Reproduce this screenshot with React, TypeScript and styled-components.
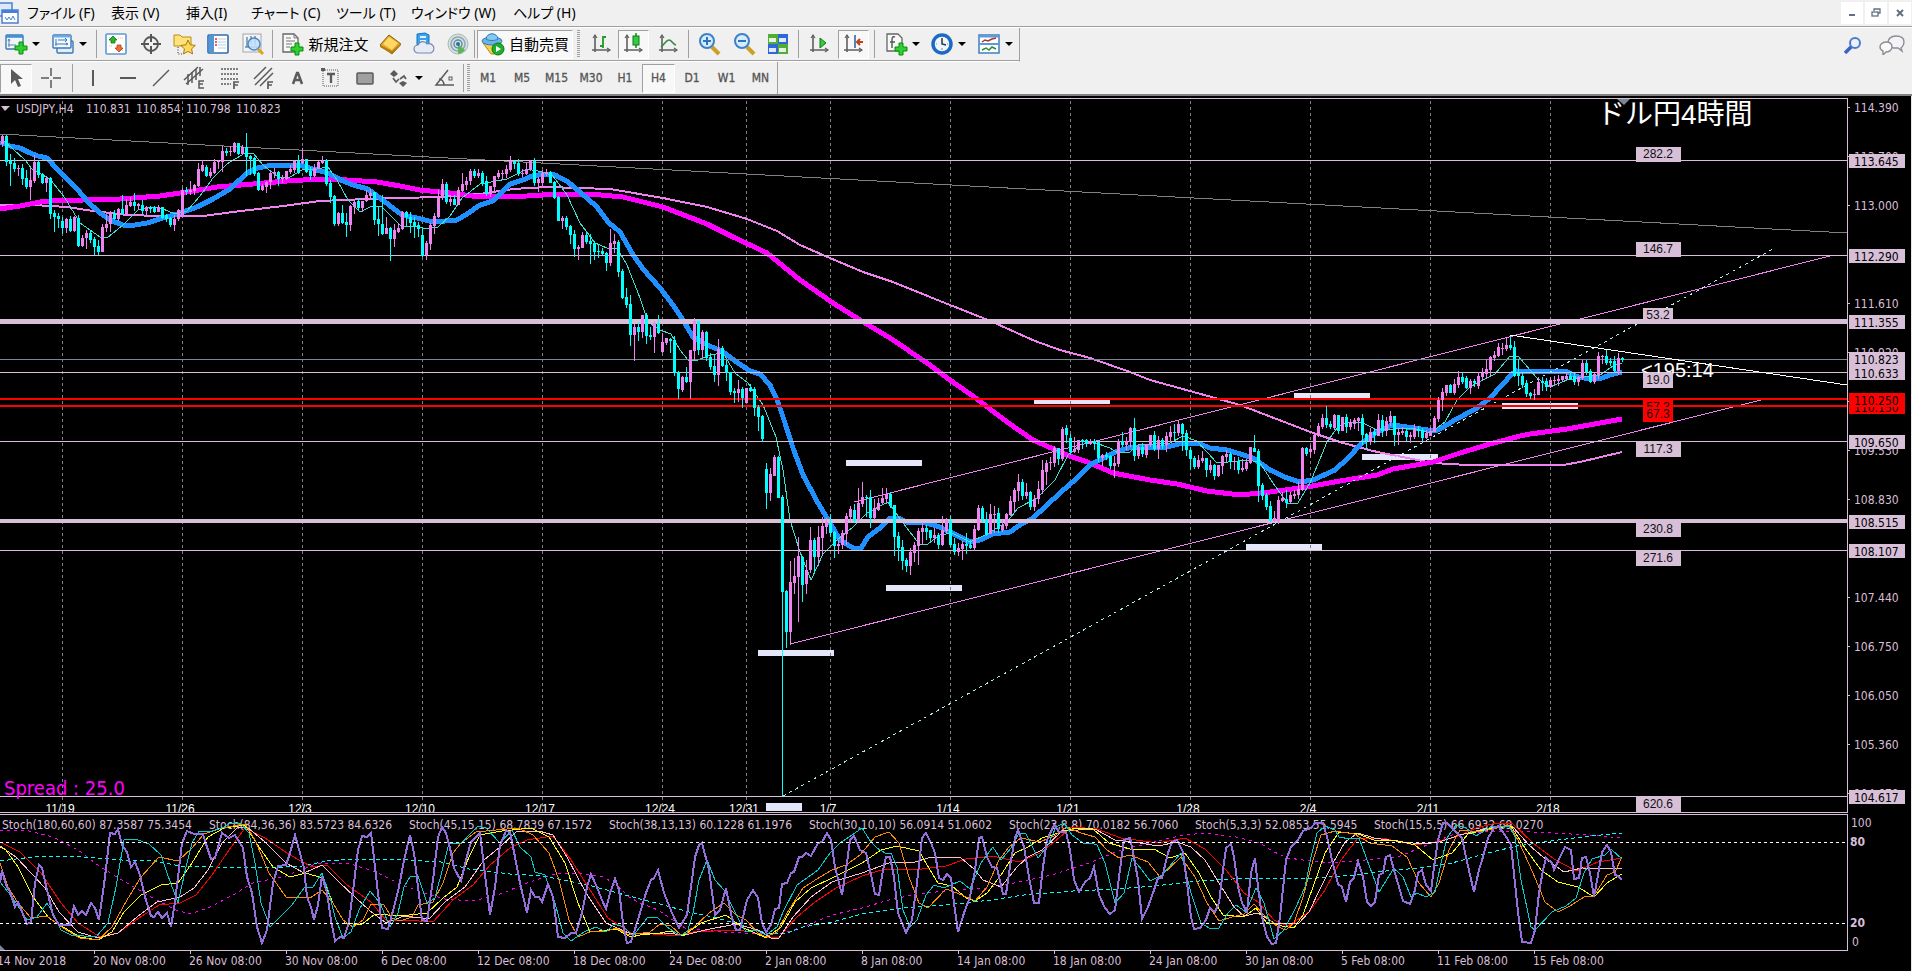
import React from "react";
import styled, { createGlobalStyle, css } from "styled-components";

const THISTLE = "#d8bfd8";
const UP = "#ee82ee";
const DOWN = "#00ffff";
const UI_FONT = '"Noto Sans", "Noto Sans CJK JP", sans-serif';
const CHART_FONT = '"DejaVu Sans Condensed", "DejaVu Sans", sans-serif';
const LABEL_FONT = '"Liberation Sans", "Noto Sans CJK JP", sans-serif';

const GlobalStyle = createGlobalStyle`
  *, *::before, *::after { box-sizing: border-box; }
  body { margin: 0; background: #000; overflow-x: hidden; }
`;

/* ---------- layout ---------- */

const Page = styled.div`
  display: flex;
  flex-direction: column;
  min-height: 100vh;
  background: #000;
  font-family: ${UI_FONT};
`;

const MenuBar = styled.nav`
  display: flex;
  align-items: center;
  height: 28px;
  padding-bottom: 2px;
  background: #f0f0f0;
  border-bottom: 1px solid #fff;
  box-shadow: inset 0 -1px 0 #a0a0a0;
`;

const AppMark = styled.span`
  display: flex;
  width: 27px;
  flex: none;
`;

const MenuItem = styled.button<{ $w: number }>`
  width: ${(p) => p.$w}px;
  flex: none;
  padding: 0;
  border: 0;
  background: none;
  color: #000;
  font: 14px/24px ${UI_FONT};
  font-feature-settings: "palt";
  text-align: left;
  white-space: nowrap;
`;

const WindowButtons = styled.div`
  display: flex;
  gap: 2px;
  margin-left: auto;
  padding-right: 1px;
`;

const WindowButton = styled.button`
  display: flex;
  align-items: center;
  justify-content: center;
  width: 22px;
  height: 22px;
  padding: 0;
  border: 0;
  background: #fff;
`;

const ToolArea = styled.header`
  background: #f0f0f0;
  border-bottom: 2px solid #808080;
`;

const ToolRow = styled.div`
  display: flex;
  align-items: center;
`;

const ToolStrip = styled.div<{ $ruled?: boolean }>`
  display: flex;
  align-items: center;
  height: 32px;
  border-right: 1px solid #a0a0a0;
  ${(p) =>
    p.$ruled &&
    css`
      height: 34px;
      padding-bottom: 1px;
      border-bottom: 1px solid #fff;
      box-shadow: inset 0 -1px 0 #a0a0a0;
    `}
`;

const Tool = styled.button<{ $w: number; $pressed?: boolean }>`
  display: flex;
  align-items: center;
  justify-content: center;
  gap: 4px;
  flex: none;
  width: ${(p) => p.$w}px;
  height: 29px;
  padding: 0;
  border: 1px solid transparent;
  background: none;
  color: #000;
  font: 15px/20px ${UI_FONT};
  white-space: nowrap;
  ${(p) =>
    p.$pressed &&
    css`
      border-color: #a0a0a0 #fff #fff #a0a0a0;
      background: #f8f8f8;
    `}
`;

const PeriodTool = styled(Tool)`
  color: #555;
  font: 12px/16px ${CHART_FONT};
  -webkit-text-stroke: 0.3px #555;
`;

const Separator = styled.span<{ $w?: number }>`
  flex: none;
  width: ${(p) => p.$w ?? 4}px;
  height: 28px;
  background: linear-gradient(#a0a0a0, #a0a0a0) center / 1px 100% no-repeat;
`;

const Grip = styled.span<{ $w: number }>`
  flex: none;
  width: ${(p) => p.$w}px;
  height: 28px;
  background: repeating-linear-gradient(#a0a0a0 0 1px, transparent 1px 2px) center / 3px 100% no-repeat;
`;

const StatusTools = styled.div`
  display: flex;
  align-items: center;
  gap: 16px;
  margin-left: auto;
  padding-right: 6px;
`;

const IconButton = styled.button`
  display: flex;
  padding: 0;
  border: 0;
  background: none;
`;

const ChartWindow = styled.main`
  display: flex;
  flex-direction: column;
  flex: 1;
  gap: 1px;
  padding-top: 2px;
  border-right: 1px solid #e8e8e8;
  background: #000;
`;

const Pane = styled.section<{ $h: number }>`
  display: flex;
  height: ${(p) => p.$h}px;
`;

const Plot = styled.div`
  flex: 1;
  min-width: 0;
  border: solid ${THISTLE};
  border-width: 1px 1px 1px 0;
`;

const Drawing = styled.svg`
  display: block;
  width: 100%;
  height: 100%;
  overflow: hidden;
`;

const Axis = styled.svg`
  display: block;
  flex: none;
  width: 63px;
  height: 100%;
`;

const DateScale = styled.svg`
  display: block;
  width: 100%;
  height: 20px;
  margin-top: -1px;
`;

/* ---------- icons ---------- */

type IconProps = { w?: number; h?: number; children: React.ReactNode };
const Icon = ({ w = 24, h = 24, children }: IconProps) => (
  <svg width={w} height={h} viewBox={`0 0 ${w} ${h}`} fill="none" aria-hidden="true">
    {children}
  </svg>
);

const Caret = () => (
  <svg width="8" height="4" viewBox="0 0 8 4" aria-hidden="true">
    <path d="M0 0h8L4 4z" fill="#000" />
  </svg>
);

const Plus = ({ x, y }: { x: number; y: number }) => (
  <path
    d={`M${x + 4} ${y}h4v4h4v4h-4v4h-4v-4h-4v-4h4z`}
    fill="#2fd02f"
    stroke="#0a8a0a"
    strokeWidth="1"
  />
);

const Axes = ({ x = 3 }: { x?: number }) => (
  <g stroke="#606060" strokeWidth="1.6">
    <path d={`M${x + 1} 3v17M${x - 2} 18h18`} />
    <path d={`M${x - 1} 6l2-3 2 3M${x + 13} 16l3 2-3 2`} strokeWidth="1.2" />
  </g>
);

const LogoIcon = () => (
  <Icon w={20} h={22}>
    <rect x="-4" y="1" width="16" height="13" fill="#dce9fb" stroke="#4a7fd6" strokeWidth="1.5" />
    <rect x="2" y="8" width="16" height="13" fill="#fff" stroke="#4a7fd6" strokeWidth="1.5" />
    <path d="M2 9.500h16" stroke="#4a7fd6" strokeWidth="3" />
    <path d="M5 15l2 3 2-3 2 3 2-4 2 4" stroke="#4a7fd6" />
  </Icon>
);

const NewChartIcon = () => (
  <Icon>
    <rect x="2" y="3" width="17" height="14" rx="1" fill="#eef5fd" stroke="#3c78b4" strokeWidth="1.4" />
    <path d="M2 4.500h17" stroke="#3c8fd8" strokeWidth="2.500" />
    <path d="M5 7v8M4 13h8M4 9l1-2 1 2" stroke="#5a86b0" />
    <Plus x={11} y={10} />
  </Icon>
);

const ProfilesIcon = () => (
  <Icon>
    <rect x="6" y="9" width="16" height="12" rx="1" fill="#e2eefa" stroke="#3c78b4" strokeWidth="1.400" />
    <rect x="2" y="3" width="18" height="13" rx="1" fill="#f2f8fe" stroke="#3c78b4" strokeWidth="1.400" />
    <path d="M2 4.500h18" stroke="#6aaee8" strokeWidth="2" />
    <path d="M5 7v7M4 12h12M7 8h9M14 6l2 2-2 2M15 11l2 1-2 1" stroke="#3c78b4" />
  </Icon>
);

const MarketIcon = () => (
  <Icon>
    <rect x="2" y="2" width="20" height="20" rx="1" fill="#fff" stroke="#5b9bd0" strokeWidth="1.600" />
    <path d="M5 6h4M5 14h4M14 6h5M14 18h5" stroke="#e3b68a" strokeDasharray="1 1" />
    <path d="M9 4l4 4h-2v3H7V8H5z" fill="#28b428" stroke="#0d7a0d" strokeWidth="0.800" />
    <path d="M15 20l4-4h-2v-3h-4v3h-2z" fill="#f06a3a" stroke="#b93b12" strokeWidth="0.800" />
  </Icon>
);

const CrosshairIcon = () => (
  <Icon>
    <circle cx="12" cy="12" r="7" stroke="#555" strokeWidth="1.800" />
    <path d="M12 2v8M12 14v8M2 12h8M14 12h8" stroke="#555" strokeWidth="2" />
  </Icon>
);

const NavigatorIcon = () => (
  <Icon>
    <path d="M2 3h6l2 2h9v9H2z" fill="#ffe37a" stroke="#b58f16" />
    <path d="M6 15v7h4" stroke="#333" strokeDasharray="1 1.500" />
    <path d="M16 8l2.300 4.800 5 .6-3.700 3.500 1 5-4.600-2.500-4.500 2.500.9-5L9 13.400l5-.6z" fill="#ffd95c" stroke="#a8780e" />
  </Icon>
);

const TerminalIcon = () => (
  <Icon>
    <rect x="2" y="3" width="20" height="18" rx="1" fill="#fff" stroke="#2f6cad" strokeWidth="1.600" />
    <path d="M3 4h5v16H3z" fill="#4f97d8" />
    <path d="M9 7h2M9 10h2M9 13h2" stroke="#e03030" strokeWidth="1.400" />
    <path d="M12 7h8M12 10h8M12 13h8M12 16h8" stroke="#b9cfe4" />
  </Icon>
);

const TesterIcon = () => (
  <Icon>
    <rect x="2" y="2" width="18" height="18" fill="#f4f4f4" stroke="#a0a8b0" />
    <path d="M6 5v10M10 4v8M14 4v9M4 15h13" stroke="#6c8db0" strokeWidth="1.500" />
    <circle cx="13" cy="12" r="6" fill="#bfe0fa" fillOpacity="0.850" stroke="#4a86c0" strokeWidth="1.400" />
    <path d="M17 17l5 5" stroke="#d9a520" strokeWidth="3" />
  </Icon>
);

const NewOrderIcon = () => (
  <Icon>
    <path d="M3 2h11l4 4v14H3z" fill="#f8f8f8" stroke="#666" strokeWidth="1.300" />
    <path d="M14 2v4h4M6 6h5M6 9h9M6 12h6M6 15h4" stroke="#777" />
    <Plus x={11} y={11} />
  </Icon>
);

const BookIcon = () => (
  <Icon>
    <path d="M2 13L11 3l12 9-9 10z" fill="#e0a828" stroke="#8a5d08" />
    <path d="M5 12l6-7 9 6-6 7z" fill="#ffd766" />
    <path d="M2 13l12 6 9-8v2l-9 9L2 15z" fill="#b57a10" />
  </Icon>
);

const CloudIcon = () => (
  <Icon>
    <path d="M5 2l8-1 4 2v11H5z" fill="#37a2ee" stroke="#1a72bd" />
    <path d="M8 4h6v2H8zM8 8h6v2H8z" fill="#dff1ff" />
    <path d="M6 21a4 4 0 010-8 5 5 0 019-1 4.500 4.500 0 014 9z" fill="#e6ecf6" stroke="#7688aa" strokeWidth="1.200" />
  </Icon>
);

const SignalIcon = () => (
  <Icon>
    <circle cx="12" cy="12" r="10" fill="#d4e3dc" stroke="#a8b8b4" />
    <circle cx="12" cy="12" r="7" stroke="#8fa6bc" strokeWidth="1.600" />
    <circle cx="12" cy="12" r="4" stroke="#5f86ac" strokeWidth="1.400" />
    <path d="M12 12v10a10 10 0 007-4z" fill="#58b858" />
    <circle cx="12" cy="12" r="2" fill="#2f6cad" />
  </Icon>
);

const AutoTradeIcon = () => (
  <Icon>
    <path d="M2 11h18l-7 11h-3z" fill="#f4cf52" stroke="#b48a18" />
    <ellipse cx="11" cy="9" rx="10" ry="4" fill="#68b4e8" stroke="#2f7ab0" />
    <path d="M5 7c1-7 11-7 12 0-3 2-9 2-12 0z" fill="#86c8f2" stroke="#2f7ab0" />
    <circle cx="17" cy="17" r="6" fill="#1fae2b" stroke="#0b7a14" />
    <path d="M15 14v6l5-3z" fill="#fff" />
  </Icon>
);

const BarsIcon = () => (
  <Icon>
    <Axes x={5} />
    <path d="M11 14h3V5h3M14 14v2" stroke="#1f9a2c" strokeWidth="1.800" />
  </Icon>
);

const CandlesIcon = () => (
  <Icon>
    <Axes x={4} />
    <path d="M14 1v15" stroke="#0d7a0d" strokeWidth="1.400" />
    <rect x="11" y="4" width="6" height="9" fill="#35c94a" stroke="#0d7a0d" />
  </Icon>
);

const LineChartIcon = () => (
  <Icon>
    <Axes x={5} />
    <path d="M5 15c4-3 5-7 8-7s3 4 7 5" stroke="#3b8a4a" strokeWidth="1.600" />
  </Icon>
);

const ZoomIcon = ({ plus }: { plus?: boolean }) => (
  <Icon>
    <path d="M15 15l7 7" stroke="#caa028" strokeWidth="4" />
    <circle cx="10" cy="9" r="7" fill="#d5ecfc" stroke="#3c82c4" strokeWidth="2" />
    <path d={plus ? "M6 9h8M10 5v8" : "M6 9h8"} stroke="#2f74b8" strokeWidth="2" />
  </Icon>
);

const TilesIcon = () => (
  <Icon>
    {[
      [2, 2, "#4fae34"],
      [12, 2, "#2f66d8"],
      [2, 12, "#2f66d8"],
      [12, 12, "#4fae34"],
    ].map(([x, y, c], i) => (
      <g key={i}>
        <rect x={x} y={y} width="10" height="10" fill={String(c)} />
        <path d={`M${Number(x) + 1} ${Number(y) + 4}h7v4h-7z`} fill="#fff" fillOpacity="0.850" />
      </g>
    ))}
  </Icon>
);

const ScrollIcon = () => (
  <Icon>
    <Axes x={5} />
    <path d="M13 6v10l6-5z" fill="#35c94a" stroke="#0d7a0d" />
  </Icon>
);

const ShiftIcon = () => (
  <Icon>
    <Axes x={4} />
    <path d="M13 3v13" stroke="#2f66a8" strokeWidth="1.600" />
    <path d="M21 10h-6M18 7l-3 3 3 3" stroke="#c0401c" strokeWidth="2" />
  </Icon>
);

const IndicatorIcon = () => (
  <Icon>
    <path d="M3 2h11l4 4v13H3z" fill="#f8f8f8" stroke="#666" strokeWidth="1.300" />
    <path d="M11 5c-3-1-3 1-3 4v7M6 10h5" stroke="#555" strokeWidth="1.400" />
    <Plus x={11} y={11} />
  </Icon>
);

const ClockIcon = () => (
  <Icon>
    <circle cx="12" cy="12" r="9" fill="#eef5fc" stroke="#1d6ac2" strokeWidth="3.500" />
    <path d="M12 6v6l4 1" stroke="#333" strokeWidth="1.500" />
    <path d="M12 16v2M6 12h1M17 12h1" stroke="#888" />
  </Icon>
);

const TemplateIcon = () => (
  <Icon>
    <rect x="2" y="3" width="20" height="18" fill="#fff" stroke="#3f7fc0" strokeWidth="1.500" />
    <path d="M2 4.500h20M2 12h20" stroke="#5b9bdc" strokeWidth="2" />
    <path d="M5 10l3-2 3 1 4-2 4-1" stroke="#b0342c" strokeWidth="1.500" />
    <path d="M5 18l4-2 3 2 3-3 4 2" stroke="#2f8a3a" strokeWidth="1.500" />
  </Icon>
);

const SearchIcon = () => (
  <Icon w={18} h={18}>
    <path d="M1 17l7-7" stroke="#3a62c0" strokeWidth="3.500" />
    <circle cx="11" cy="7" r="5" fill="#eaf2fd" stroke="#4d79cf" strokeWidth="2" />
  </Icon>
);

const ChatIcon = () => (
  <Icon w={28} h={20}>
    <path d="M18 1c5 0 8 2 8 6s-2 5-3 6l1 3-4-3h-4c-4 0-6-3-6-6s3-6 8-6z" fill="#f4f4f8" stroke="#8c8c94" strokeWidth="1.400" />
    <path d="M8 7c4 0 6 2 6 5s-3 5-6 5l-3 3v-4c-2-1-3-2-3-4s2-5 6-5z" fill="#fafafc" stroke="#8c8c94" strokeWidth="1.400" />
  </Icon>
);

const G = "#5a5a5a";
const CursorIcon = () => (
  <Icon>
    <path d="M7 3v15l4-4 3 7 3-1-3-7h5z" fill={G} />
  </Icon>
);
const CrossIcon = () => (
  <Icon>
    <path d="M12 2v8M12 14v8M2 12h8M14 12h8" stroke={G} strokeWidth="1.500" />
  </Icon>
);
const VLineIcon = () => (
  <Icon>
    <path d="M12 4v16" stroke={G} strokeWidth="2" />
  </Icon>
);
const HLineIcon = () => (
  <Icon>
    <path d="M4 12h16" stroke={G} strokeWidth="2" />
  </Icon>
);
const TrendIcon = () => (
  <Icon>
    <path d="M4 20L20 4" stroke={G} strokeWidth="1.500" />
  </Icon>
);
const ChannelIcon = () => (
  <Icon>
    <path d="M1 14L15 1M3 18L20 3" stroke={G} strokeWidth="1.500" />
    <path d="M5 8v11M9 6v11M13 3v11M17 1v9" stroke={G} strokeWidth="1.500" />
    <path d="M21 15h-5v7h5M16 18h4" stroke={G} strokeWidth="1.500" />
  </Icon>
);
const FiboIcon = () => (
  <Icon>
    <path d="M3 3h18M3 8h18M3 13h18M3 18h10" stroke={G} strokeWidth="1.500" strokeDasharray="2 1" />
    <path d="M21 16h-5v7M16 19h4" stroke={G} strokeWidth="1.700" />
  </Icon>
);
const PitchIcon = () => (
  <Icon>
    <path d="M2 13L14 1M3 19L20 2M8 20l13-13" stroke={G} strokeWidth="1.500" />
    <path d="M21 16h-5v7M16 19h4" stroke={G} strokeWidth="1.700" />
  </Icon>
);
const TextIcon = () => (
  <Icon>
    <path d="M7 18l4-11h1l4 11M9 14h5" stroke={G} strokeWidth="2.500" />
  </Icon>
);
const LabelIcon = () => (
  <Icon>
    <rect x="4" y="4" width="15" height="16" stroke={G} strokeDasharray="1 1" />
    <path d="M8 8h8M12 8v9" stroke={G} strokeWidth="2.300" />
    <path d="M2 2h4v3H2z" fill={G} />
  </Icon>
);
const RectIcon = () => (
  <Icon>
    <rect x="4" y="7" width="16" height="11" rx="1" fill="#a0a0a0" stroke={G} strokeWidth="1.500" />
  </Icon>
);
const ShapesIcon = () => (
  <Icon>
    <path d="M3 8l4-4 4 4-4 3zM12 17l4-2 4 2-4 4z" fill={G} />
    <path d="M6 12l3 4 3-3M13 13l4-3 2 3" stroke={G} strokeWidth="1.700" />
  </Icon>
);
const AngleIcon = () => (
  <Icon>
    <path d="M15 4L3 19h18M6 13c3 0 5 3 5 6" stroke={G} strokeWidth="1.500" />
    <rect x="16" y="11" width="3" height="3" stroke={G} />
  </Icon>
);

/* ---------- chart data ---------- */

/* Each bar: direction (u/d), then high, body top, body bottom and low,
   in thirds of a pixel below the top of its block. */
type Block = { first: number; top: number; bars: string };
const BLOCKS: Block[] = [
  {
    first: 0,
    top: 90,
    bars: `u135,138,162,172 d135,138,216,228 d192,212,222,288 d205,219,236,245 u225,233,236,258 d222,234,266,285
d240,265,291,297 u234,270,291,330 u196,216,274,279 d212,216,254,264 d248,252,279,282 u262,264,279,305
d262,264,372,387 d360,370,380,426 d370,377,388,415 d382,394,413,432 u384,387,415,428 d378,387,422,426
u378,382,422,426 d376,384,467,470 u435,444,468,472 u420,429,444,477 d424,430,450,459 d442,447,470,495
d451,468,486,496 u402,411,485,486 u375,402,413,426 u362,370,402,426 d360,369,387,390 u354,357,387,393
d316,356,372,375 u327,345,375,378 u320,335,348,350 d309,336,348,363 u340,342,347,360 d330,345,363,375
u348,352,363,378 d348,351,357,368 d348,351,366,368 u345,350,366,366 d350,351,384,386 d372,376,387,395
d380,384,405,411 u376,387,405,423 u356,360,386,392 u295,300,375,378 d291,300,306,315 u273,300,306,315
u282,285,303,314 u220,237,288,291 u211,225,243,246 d226,231,258,260 u234,246,258,264 u208,216,248,252
u210,212,215,238 u168,182,216,246 d174,183,188,198 u168,183,186,198 u156,159,186,190 d158,159,191,194
u166,172,192,195 d129,171,201,258 d195,198,206,255 d200,204,252,258 d246,249,300,303 u282,288,300,303
u272,276,291,309 u243,249,276,297 u234,246,252,264 d243,246,266,288 u255,264,268,278 u243,243,267,270
u225,237,246,252 u210,212,240,250 d196,212,249,252 u175,206,218,222 d206,208,246,249 d232,243,258,270
u222,234,258,260 u213,216,236,238 u198,213,219,222 d207,211,282,288 d270,279,321,339 d316,318,402,408
u366,369,402,408 d346,369,399,402 d368,396,405,441 u345,348,405,423 u330,336,351,372 d325,334,354,360
u332,334,354,366 u300,315,334,336 u297,310,318,324 d306,307,390,405 d351,387,402,438 d315,402,432,436
u381,415,432,432 d411,414,447,513 u402,420,447,471 u400,414,426,428 u362,366,417,420 d362,366,382,408
d366,381,399,429 d382,396,407,444 d396,405,417,441 d411,435,498,502 u454,459,496,510 u399,405,462,480
u370,377,408,432 u300,318,381,384 u267,282,324,330 d276,282,336,342 u316,327,336,348 d315,328,345,345
u291,300,345,345 u249,282,302,306 u261,273,285,300 u237,243,273,285 d238,243,258,264 u237,249,258,264`,
  },
  {
    first: 120,
    top: 120,
    bars: `d153,159,192,198 d168,183,222,227 u198,198,222,231 u168,168,201,219 u150,159,171,177 u150,159,162,180
u135,147,162,173 u108,122,150,155 d122,123,132,147 d116,129,162,168 u147,158,161,171 u126,147,162,165
u120,122,150,153 d114,123,189,198 u172,177,189,216 u150,159,189,198 u147,156,161,168 d153,156,189,189
d183,186,234,237 d228,231,303,303 u288,294,303,327 d288,294,321,330 d315,318,345,372 d330,342,387,411
u375,381,387,420 u336,345,384,384 d336,345,366,372 d342,363,372,432 d363,369,396,420 d372,393,396,414
d384,393,402,405 d396,399,429,453 u327,369,429,438 u342,363,372,399 d360,366,456,471 d447,453,534,537
d504,531,555,564 d525,552,645,678 u612,621,645,723 d606,621,636,663 u585,585,636,654 d579,585,648,672
d621,645,651,660 u603,609,651,699 d585,609,639,642 u639,666,696,699 u654,654,669,675 d654,657,663,699
d648,660,759,768 d753,756,807,837 u768,771,810,816 d741,771,786,789 u690,690,786,837 u594,603,693,720
d603,603,690,705 u630,636,690,714 d633,636,714,723 d699,711,741,750 d705,738,765,786 u657,687,765,798
d678,684,738,741 d720,735,759,783 d756,756,816,825 d804,813,819,849 u780,807,819,846 d801,807,834,864
u804,804,849,849 d792,804,813,816 d801,807,864,888 d855,861,891,933 d885,888,957,966`,
  },
  {
    first: 191,
    top: 380,
    bars: `d249,267,339,387 u264,282,339,363 u225,231,288,288 d228,231,354,354 d345,351,636,1248 d630,633,756,804
u543,606,756,795 u534,588,609,642 u471,528,591,726 d528,531,615,666 u540,570,612,642 u441,480,570,579
d474,480,531,576 u438,471,531,558 u411,438,474,525 u414,426,441,462 d402,429,459,471 d453,456,498,534
u480,492,498,522 u450,459,495,507 u399,408,462,495 u378,387,411,429 d372,390,423,429 u324,369,420,426
u306,351,372,381 d345,351,354,411 d330,351,414,444 u357,384,414,420 u354,369,390,393 u324,354,369,372
u324,342,357,372 d336,342,378,384 d375,375,471,528 d456,468,504,543 d480,501,543,570 d534,540,558,576
u504,516,558,585 u486,495,519,546 u444,453,498,555 u426,444,456,495 d435,444,456,480 d450,450,474,483
u444,465,474,489 d459,465,495,507 u408,450,495,498 u414,420,453,459 d408,423,495,501 d474,492,516,525
u489,504,516,528 u483,492,507,540 d459,492,498,522 d480,495,504,507 u435,447,504,513 u375,384,450,453
d378,384,417,429 d396,417,465,468 u372,402,462,462 u378,402,405,459 d384,399,447,459 u420,435,450,456
u399,402,438,447 u348,363,405,408 u324,330,366,396 u282,306,333,363 d297,306,348,360 u309,336,348,357
d333,336,381,390 u345,357,381,393 u303,327,357,372 u240,270,330,342 u240,249,276,315 u231,246,249,270
u198,204,249,261 d204,204,237,255 u141,147,237,243 d135,144,165,189 d162,174,216,225 u171,207,216,219
u180,180,210,219 d177,180,186,207 d177,180,192,201 u177,183,192,195 d177,183,192,210 d183,186,234,246
u222,225,234,258 d216,225,231,240 d225,228,258,267 u228,249,258,294 u177,183,252,261 d156,183,195,201
u171,183,195,210 u141,144,186,201 d114,144,228,243 u192,201,228,237 d189,201,222,231 u192,192,225,234
u165,165,195,201 d153,165,207,213 u168,180,207,237 d174,180,198,207 u156,168,195,216 u138,156,171,186
d132,156,159,180 u123,132,159,168 d129,132,162,213 d150,159,210,228 d201,210,237,270 d228,234,261,267
u225,240,261,267 u213,234,243,249 d234,234,270,291 u240,255,270,279 d252,255,288,300 u255,255,288,291
u225,228,258,282 u210,222,231,246 d216,222,246,267 u231,243,246,270 d231,243,270,282 u237,264,270,276
u237,246,267,273 u201,201,249,252 d165,204,216,216 d207,213,318,366 d309,315,348,360 d339,345,381,390
d363,378,423,426 u393,414,423,426 u348,360,423,432 u336,354,363,366 d330,357,369,384 u336,345,366,372
u330,342,348,357 u306,327,345,357 u201,204,330,333 d201,204,222,228 u195,207,216,234 u159,165,210,222
u129,138,168,171 u102,114,141,147 d78,114,135,144 d123,132,141,147 u102,105,144,150 d105,105,153,162
u111,111,153,153 d102,111,141,159 u117,126,141,150 u114,120,132,147 u111,114,123,153 d102,114,165,195
d159,162,183,210 u144,156,186,195 d147,156,165,189 u102,120,168,168 d105,120,153,171 u111,123,153,168
u93,108,126,138 d108,108,165,198 u144,156,165,195 u141,153,159,165 d144,153,171,183 u156,165,171,189
u132,147,171,177 d138,147,153,171 d144,150,174,183 u150,159,174,177 u141,153,168,168 u108,114,156,156
u51,60,117,126`,
  },
  {
    first: 360,
    top: 300,
    bars: `u264,276,300,333 u255,255,279,288 d252,255,279,279 u237,252,279,285 u213,231,255,264 d219,231,246,252
d228,234,264,267 u237,243,264,282 d237,243,249,261 u216,228,258,267 u204,219,231,240 u177,207,222,237
u168,171,210,228 u153,165,174,183 u129,141,168,171 u129,144,147,165 u114,135,147,153 d111,135,144,150
d123,141,228,231 d177,219,228,258 d219,228,255,264 d240,249,282,291 d276,279,288,297 u267,282,285,300
u231,246,285,285 d231,243,249,273 d234,243,261,273 u231,240,261,264 u228,240,243,258 u225,237,243,258
u228,228,240,243 u219,228,237,240 d213,228,237,240 d219,228,246,255 u228,231,246,258 u180,189,234,240
d180,189,216,225 d207,213,246,249 u219,222,246,252 u156,168,225,237 u165,168,171,192 d150,168,189,195
d174,183,189,198 d168,183,213,216 u159,174,213,225 d171,174,180,186`,
  },
];

type Bar = { x: number; up: boolean; hi: number; top: number; bottom: number; lo: number };
const BARS: Bar[] = BLOCKS.flatMap(({ first, top, bars }) =>
  bars.split(/\s+/).map((text, i) => {
    const [hi, t, b, lo] = text.slice(1).split(",").map((v) => top + Math.round(Number(v) / 3));
    return { x: 2 + 4 * (first + i), up: text[0] === "u", hi, top: t, bottom: b, lo };
  })
);

const MA_BLUE =
  "0,142 10,146 20,148 30,153 38,156 47,158 58,170 70,182 78,190 88,202 100,213 112,221 123,225 135,225 147,223 163,218 177,214 197,207 213,199 230,189 247,173 257,168 273,165 283,166 300,165 313,169 328,173 343,181 353,185 368,189 380,198 402,215 417,218 433,222 457,220 467,214 480,205 493,201 510,184 523,180 532,176 545,174 555,175 568,182 580,192 597,207 608,222 620,232 632,253 643,269 660,288 673,305 683,320 693,337 707,345 722,351 735,361 750,371 760,374 770,385 778,402 785,423 793,448 803,475 818,503 830,523 840,540 853,548 861,548 868,537 880,528 890,518 898,518 907,522 922,522 937,526 950,532 970,542 980,540 992,534 1010,532 1020,525 1033,518 1060,493 1077,478 1090,465 1103,458 1118,451 1132,447 1167,447 1183,443 1200,444 1210,448 1227,450 1237,453 1253,458 1270,470 1287,478 1300,482 1313,480 1335,470 1348,458 1362,443 1377,432 1392,425 1407,427 1435,431 1442,428 1453,421 1477,408 1490,398 1502,385 1512,374 1517,371 1567,372 1578,377 1590,379 1602,378 1610,375 1622,372";
const MA_MAGENTA =
  "0,209 20,206 40,202 63,200 83,200 120,199 160,196 187,192 217,187 253,184 287,181 320,179 347,180 377,182 400,186 420,190 450,193 480,197 527,196 557,194 590,194 623,197 663,207 707,224 733,237 767,253 800,280 833,303 860,320 890,338 927,363 950,380 977,399 1007,422 1033,440 1067,455 1090,463 1113,473 1150,480 1177,484 1207,491 1240,495 1270,492 1307,487 1340,481 1377,475 1393,469 1433,462 1460,453 1490,444 1520,436 1530,434 1567,429 1600,423 1622,419";
const MA_VIOLET =
  "0,205 33,205 67,207 93,211 127,215 160,216 203,216 233,212 283,206 320,201 367,199 400,198 440,197 480,194 513,189 547,187 610,189 663,198 707,207 747,219 777,231 800,245 830,258 863,272 893,282 930,297 950,305 983,318 997,324 1035,341 1060,350 1090,358 1130,372 1150,380 1190,391 1240,405 1287,423 1313,433 1343,443 1373,451 1407,458 1433,463 1467,465 1563,465 1580,462 1622,452";
const MA_TEAL =
  "3,140 13,149 25,160 32,169 50,179 65,198 80,223 100,237 107,238 123,225 138,210 152,207 163,209 175,214 187,211 200,196 213,178 227,164 245,153 253,153 263,165 278,177 290,177 302,170 317,169 328,167 337,180 348,200 360,212 372,206 382,207 392,217 402,227 413,226 427,229 438,227 450,216 462,198 480,184 507,179 527,169 543,172 553,176 567,195 580,223 595,243 607,248 617,248 627,265 640,298 648,322 660,330 671,334 680,350 688,360 698,360 710,355 723,353 735,373 748,383 763,405 776,437 783,470 790,520 800,552 811,580 823,554 837,540 853,527 867,513 888,502 903,523 920,545 928,544 940,535 952,533 970,542 987,534 1007,522 1018,508 1037,498 1055,480 1068,455 1080,445 1093,442 1110,448 1118,453 1130,452 1138,445 1170,443 1183,436 1197,441 1217,463 1250,460 1260,463 1273,483 1288,504 1298,503 1310,483 1327,442 1337,428 1347,422 1363,423 1377,430 1413,428 1430,433 1445,422 1457,400 1470,387 1477,383 1495,374 1510,356 1518,356 1537,378 1550,387 1567,380 1590,376 1600,375 1613,366 1622,363";

const STOCH = [
  {
    color: "#ff00ff",
    dash: "3 4",
    points:
      "0,830 29,831 53,837 78,850 102,868 127,883 151,897 176,910 190,914 208,908 233,895 253,883 286,876 318,863 351,864 376,872 400,884 424,893 445,899 473,901 498,895 527,883 555,874 580,873 604,877 620,888 629,897 640,903 658,910 685,928 722,932 762,934 783,933 803,927 832,915 862,908 889,900 917,894 946,891 987,888 1019,882 1052,875 1089,863 1121,850 1154,842 1183,835 1207,833 1236,837 1260,843 1272,851 1288,858 1325,863 1354,861 1398,857 1427,845 1452,835 1492,831 1533,832 1590,835 1622,838",
  },
  {
    color: "#00ffff",
    dash: "4 3",
    points:
      "0,861 41,856 82,857 122,860 155,861 180,866 216,867 286,867 302,866 327,861 355,859 408,860 441,862 469,869 510,874 543,876 588,885 640,899 660,904 689,912 713,917 738,924 766,933 787,933 803,927 832,922 862,914 901,908 946,905 991,900 1024,895 1073,891 1117,889 1154,886 1199,881 1232,879 1272,878 1317,878 1354,875 1386,871 1419,868 1452,863 1488,853 1517,846 1558,840 1590,836 1622,833",
  },
  {
    color: "#ff0000",
    points:
      "0,842 20,852 41,873 61,903 78,923 100,937 118,933 139,918 159,905 180,903 196,895 212,875 229,850 245,828 265,838 290,855 312,867 327,865 347,885 371,902 386,920 404,920 433,922 453,900 473,885 490,865 510,848 527,840 553,836 571,860 592,893 608,918 631,933 640,933 679,936 693,932 736,930 752,932 769,938 779,937 797,917 815,902 836,888 862,876 885,869 922,869 946,866 966,859 993,856 1019,862 1040,853 1054,842 1072,827 1097,829 1121,838 1158,843 1185,838 1205,849 1226,870 1244,893 1258,902 1274,920 1288,926 1309,912 1325,890 1341,860 1358,838 1382,838 1415,845 1435,842 1456,837 1476,828 1496,823 1513,824 1533,843 1554,859 1576,871 1598,862 1622,858",
  },
  {
    color: "#ffc0cb",
    points:
      "0,846 16,857 31,873 45,888 59,912 78,932 98,938 118,933 137,917 157,902 180,897 194,888 208,870 222,843 237,828 247,827 265,842 286,863 304,873 322,865 339,882 355,897 369,910 386,923 404,916 429,919 445,902 465,887 484,860 500,847 516,832 539,831 553,835 567,857 586,893 606,923 631,934 664,933 685,935 705,930 736,924 758,930 771,938 779,938 793,917 811,897 832,882 862,873 889,863 915,862 928,858 960,857 975,870 983,880 1001,887 1017,867 1028,857 1042,850 1062,831 1095,829 1115,840 1140,843 1158,846 1177,842 1191,847 1205,860 1219,883 1234,907 1244,916 1258,913 1276,924 1299,923 1309,912 1321,887 1333,863 1345,842 1358,833 1374,838 1403,842 1423,844 1439,842 1460,835 1480,830 1500,826 1513,827 1529,845 1543,857 1564,872 1582,868 1622,869",
  },
  {
    color: "#ffff00",
    points:
      "0,847 6,850 18,867 33,897 49,918 63,927 80,937 98,940 112,932 124,912 141,895 161,885 178,883 192,863 208,837 224,828 245,825 259,847 273,867 290,877 306,873 322,878 333,903 345,923 361,925 375,914 400,916 427,913 443,898 457,887 469,857 480,835 502,831 531,828 549,837 565,863 578,903 590,932 616,929 631,937 640,935 660,933 671,931 683,936 701,923 726,915 742,927 766,938 781,927 795,902 811,888 832,878 862,863 881,850 897,846 919,851 930,870 938,883 952,886 966,898 975,901 987,893 1001,875 1015,853 1028,847 1042,838 1062,832 1075,828 1093,829 1109,843 1130,849 1154,849 1170,858 1185,853 1199,873 1211,897 1223,915 1244,917 1256,908 1266,922 1282,926 1294,928 1303,915 1313,887 1325,853 1339,832 1358,834 1374,840 1394,840 1415,845 1433,860 1452,853 1468,834 1488,829 1511,826 1525,848 1541,870 1558,882 1578,887 1594,897 1607,883 1622,874",
  },
  {
    color: "#ff8c00",
    points:
      "0,863 8,887 18,903 31,918 47,916 63,928 80,938 98,940 112,927 127,900 141,877 159,857 178,861 192,848 204,834 222,828 245,824 255,840 269,873 286,897 310,898 322,890 333,903 343,920 353,927 363,920 371,904 384,905 392,918 400,921 412,917 418,905 433,902 443,883 453,853 461,843 476,832 496,830 518,828 533,835 549,853 559,880 569,920 578,937 592,931 604,932 616,928 629,935 650,932 660,924 671,926 681,935 693,928 709,913 724,903 736,915 746,920 758,933 766,937 777,932 787,913 803,888 820,877 832,870 846,865 860,855 875,837 889,832 899,843 909,877 919,903 928,908 946,889 962,895 975,901 987,887 999,860 1009,847 1021,838 1040,842 1056,835 1066,827 1081,833 1095,837 1107,850 1119,858 1130,855 1148,862 1160,877 1181,857 1195,877 1207,903 1219,921 1232,917 1244,914 1254,904 1264,915 1278,927 1286,930 1294,923 1303,897 1313,860 1321,835 1335,831 1354,834 1370,843 1392,846 1407,857 1419,883 1431,897 1439,883 1449,850 1460,830 1480,832 1509,825 1519,842 1533,873 1545,902 1558,912 1570,906 1584,897 1594,896 1607,875 1615,872 1622,857",
  },
  {
    color: "#00ced1",
    points:
      "0,882 12,897 27,920 37,917 47,903 53,913 61,930 71,935 84,936 96,937 108,923 116,887 124,840 135,839 149,844 161,855 167,873 178,903 186,867 192,843 199,831 212,831 222,828 231,823 241,824 249,833 255,863 261,903 270,927 282,915 292,905 304,888 313,887 322,873 329,893 335,917 343,938 351,932 359,910 370,891 380,903 390,927 398,913 404,887 410,877 418,876 427,903 435,898 443,867 449,843 461,844 469,835 478,826 486,828 500,843 512,830 520,847 531,857 535,872 545,875 555,903 563,933 571,941 584,932 596,927 606,932 614,924 624,927 633,936 640,927 648,917 658,918 667,927 679,935 687,933 693,913 699,880 707,860 715,880 724,890 730,902 740,922 746,932 756,930 766,935 777,927 783,912 797,885 818,870 830,853 840,843 852,835 862,828 871,842 877,848 885,853 891,853 897,867 903,910 910,927 917,920 926,895 934,885 944,888 960,881 970,889 981,863 993,847 1001,860 1011,848 1019,833 1026,834 1038,858 1048,845 1056,827 1064,823 1072,835 1083,843 1091,843 1097,845 1105,863 1115,903 1124,893 1132,858 1142,870 1150,881 1162,875 1181,853 1191,893 1201,923 1209,928 1219,928 1228,913 1236,905 1246,912 1256,888 1264,903 1274,939 1284,930 1296,907 1305,887 1311,857 1317,833 1325,826 1335,830 1339,837 1350,839 1359,838 1366,857 1379,892 1394,868 1403,877 1411,897 1417,893 1426,897 1435,892 1441,863 1447,838 1456,825 1466,828 1476,836 1492,826 1509,826 1515,837 1521,880 1531,927 1535,930 1552,912 1566,906 1576,898 1584,873 1592,859 1605,855 1611,849 1622,859",
  },
  {
    color: "#9370db",
    width: 2,
    points:
      "0,883 2,870 6,885 10,892 15,907 18,902 27,924 31,922 35,883 39,865 42,868 47,890 53,915 59,925 70,925 74,906 78,915 82,911 86,915 91,903 95,908 99,920 105,877 110,833 115,834 118,829 122,845 127,852 131,867 135,862 140,875 145,897 151,916 154,917 158,912 162,918 167,913 171,927 175,902 178,877 182,843 187,831 194,834 203,834 207,847 211,859 215,858 222,833 229,838 235,835 243,848 247,877 252,893 257,927 262,943 267,930 273,883 278,866 286,865 290,853 295,835 300,853 304,868 307,897 311,907 314,920 318,905 322,876 327,893 331,920 335,941 340,937 344,938 349,922 354,883 358,850 362,836 367,837 371,833 375,867 380,910 382,928 388,929 394,907 399,887 404,860 410,835 414,853 418,887 422,920 427,921 433,880 438,837 442,827 446,833 450,848 454,868 461,881 466,860 471,842 480,833 484,867 490,915 495,887 500,845 506,831 510,832 515,857 520,883 527,913 531,890 535,897 539,897 542,902 548,884 553,897 558,937 565,938 571,933 576,933 582,913 587,887 591,874 596,885 602,900 606,909 610,893 615,879 619,890 623,923 627,943 631,942 640,913 646,893 651,880 654,878 658,870 664,893 672,913 679,928 687,915 691,887 695,857 699,845 702,843 709,870 715,915 720,910 726,888 732,918 736,930 740,930 747,900 753,890 758,898 762,923 766,932 771,925 775,909 779,908 782,884 787,883 791,873 794,872 799,857 802,857 806,853 811,856 818,843 822,842 827,833 831,840 835,867 842,895 846,870 850,840 854,836 860,850 866,853 870,870 875,894 879,895 883,870 886,857 890,857 894,877 898,913 906,933 912,920 917,883 922,838 926,833 931,843 935,853 939,878 943,880 947,874 951,878 954,903 958,932 964,913 970,897 975,870 979,838 982,837 987,857 992,867 997,868 1003,894 1006,894 1011,860 1015,838 1018,830 1024,847 1029,877 1034,903 1039,903 1043,867 1047,840 1054,825 1059,832 1066,832 1070,850 1074,880 1079,892 1085,882 1090,878 1094,867 1099,895 1105,908 1110,914 1115,910 1119,877 1124,840 1130,838 1134,857 1138,880 1142,919 1148,907 1154,890 1158,878 1162,878 1168,853 1172,842 1177,840 1183,852 1187,883 1191,917 1194,929 1200,928 1206,920 1210,908 1215,912 1219,903 1223,870 1226,848 1231,844 1234,857 1238,887 1242,903 1247,912 1251,873 1255,858 1258,887 1262,917 1267,937 1272,944 1276,943 1280,917 1286,860 1291,847 1298,840 1303,831 1311,828 1315,823 1323,823 1327,837 1332,860 1338,884 1342,887 1346,902 1350,882 1354,878 1358,861 1363,877 1367,902 1371,906 1375,902 1379,875 1383,873 1386,857 1390,855 1394,870 1399,887 1403,901 1410,904 1415,890 1418,873 1422,870 1426,885 1431,891 1434,867 1438,840 1443,823 1447,823 1454,830 1462,838 1466,857 1470,875 1474,892 1479,870 1483,857 1488,838 1494,828 1498,826 1505,835 1511,845 1516,893 1519,920 1522,942 1531,943 1535,930 1539,893 1543,870 1546,858 1552,863 1554,870 1560,857 1565,847 1571,850 1574,879 1579,878 1582,858 1586,857 1590,873 1594,897 1598,875 1602,852 1607,845 1611,852 1615,875 1618,876 1622,880",
  },
];

const WEEKS: [number, string][] = [
  [62, "11/19"], [182, "11/26"], [302, "12/3"], [422, "12/10"], [542, "12/17"], [662, "12/24"], [746, "12/31"],
  [830, "1/7"], [950, "1/14"], [1070, "1/21"], [1190, "1/28"], [1310, "2/4"], [1430, "2/11"], [1550, "2/18"],
];

/* y, thickness, colour */
const LEVELS: [number, number, string][] = [
  [160, 1, THISTLE], [255, 1, THISTLE], [319, 5, THISTLE], [359, 1, "#778899"], [372, 1, THISTLE],
  [398, 2, "#ff0000"], [405, 2, "#ff0000"], [441, 1, THISTLE], [519, 4, THISTLE], [550, 1, THISTLE], [796, 1, THISTLE],
];

/* Short highlights over swing highs and lows: x, y, width, height */
const SWINGS = [
  [846, 460, 76, 6], [886, 585, 76, 6], [758, 650, 76, 6], [1034, 400, 76, 4], [1294, 393, 76, 5],
  [1362, 454, 76, 6], [1246, 544, 76, 6], [1502, 403, 76, 6], [766, 803, 36, 8],
];

/* text, y of the box, narrow box, red box */
const TAGS: [string, number, boolean, boolean][] = [
  ["282.2", 147, false, false], ["146.7", 242, false, false], ["53.2", 308, true, false], ["19.0", 373, true, false],
  ["57.3", 400, true, true], ["67.3", 407, true, true], ["117.3", 442, false, false], ["230.8", 522, false, false],
  ["271.6", 551, false, false], ["620.6", 797, false, false],
];

const SCALE: [number, string][] = [
  [108, "114.390"], [157, "113.700"], [206, "113.000"], [304, "111.610"], [353, "110.920"], [402, "110.220"],
  [451, "109.530"], [500, "108.830"], [598, "107.440"], [647, "106.750"], [696, "106.050"], [745, "105.360"],
  [794, "104.670"],
];

const PRICE_BOXES: [number, string, boolean][] = [
  [161, "113.645", false], [256, "112.290", false], [322, "111.355", false], [359, "110.823", false],
  [373, "110.633", false], [407, "110.150", true], [400, "110.250", true], [442, "109.650", false],
  [522, "108.515", false], [551, "108.107", false], [797, "104.617", false],
];

const DATES = [
  "14 Nov 2018", "20 Nov 08:00", "26 Nov 08:00", "30 Nov 08:00", "6 Dec 08:00", "12 Dec 08:00", "18 Dec 08:00",
  "24 Dec 08:00", "2 Jan 08:00", "8 Jan 08:00", "14 Jan 08:00", "18 Jan 08:00", "24 Jan 08:00", "30 Jan 08:00",
  "5 Feb 08:00", "11 Feb 08:00", "15 Feb 08:00",
];

const QUOTES = ["110.831", "110.854", "110.798", "110.823"];

const STOCH_TITLES: [number, string][] = [
  [2, "Stoch(180,60,60) 87.3587 75.3454"], [209, "Stoch(84,36,36) 83.5723 84.6326"],
  [409, "Stoch(45,15,15) 68.7839 67.1572"], [609, "Stoch(38,13,13) 60.1228 61.1976"],
  [809, "Stoch(30,10,10) 56.0914 51.0602"], [1009, "Stoch(23,8,8) 70.0182 56.7060"],
  [1195, "Stoch(5,3,3) 52.0853 55.5945"], [1374, "Stoch(15,5,5) 66.6932 69.0270"],
];

const Caption = styled.text<{ $dark?: boolean; $strong?: boolean }>`
  font: ${(p) => (p.$strong ? "bold" : "normal")} 12px ${CHART_FONT};
  fill: ${(p) => (p.$dark ? "#000" : THISTLE)};
`;
const TagText = styled.text`
  font: 12px ${LABEL_FONT};
  fill: #111;
  text-anchor: middle;
`;
const WeekText = styled.text`
  font: 12px ${LABEL_FONT};
  fill: #fff;
  text-anchor: middle;
`;

/* ---------- panes ---------- */

const PricePlot = () => (
  <Drawing role="img" aria-label="USDJPY H4">
    <defs>
      <pattern id="dashes" width="1" height="6" patternUnits="userSpaceOnUse">
        <rect width="1" height="3" fill="#808080" />
      </pattern>
    </defs>
    <g transform="translate(0 -99)">
      {SWINGS.map(([x, y, w, h]) => (
        <rect key={`${x}-${y}`} x={x} y={y} width={w} height={h} fill="#e6e6fa" />
      ))}
      {WEEKS.map(([x]) => (
        <g key={x} transform={`translate(${x} 101)`}>
          <rect width="1" height="712" fill="url(#dashes)" />
        </g>
      ))}
      <g fill="none" shapeRendering="crispEdges">
        <path d="M0 134L1847 233" stroke="#808080" />
        <polyline points={MA_VIOLET} stroke={UP} strokeWidth="2" />
        <polyline points={MA_MAGENTA} stroke="#ff00ff" strokeWidth="5" />
        <polyline points={MA_BLUE} stroke="#1e90ff" strokeWidth="5" />
        <polyline points={MA_TEAL} stroke="#40e0d0" />
        <path d="M854 502L1830 256M790 644L1761 400" stroke={UP} />
        <path d="M783 796L1773 249" stroke="#afeeee" strokeDasharray="3 4" />
      </g>
      {LEVELS.map(([y, h, color]) => (
        <rect key={y} x="0" y={y} width="100%" height={h} fill={color} />
      ))}
      {BARS.map((b) => (
        <g key={b.x} fill={b.up ? UP : DOWN}>
          <rect x={b.x} y={b.hi} width="1" height={Math.max(1, b.lo - b.hi)} />
          <rect x={b.x - 1} y={b.top} width="3" height={Math.max(1, b.bottom - b.top)} />
        </g>
      ))}
      <path d="M1510 335L1847 385" stroke="#fff" shapeRendering="crispEdges" />
      <text x="1641" y="377" fill="#fff" fontFamily={LABEL_FONT} fontSize="20">
        &lt;195:14
      </text>
      {TAGS.map(([text, y, narrow, red]) => (
        <g key={text}>
          <rect
            x={narrow ? 1643 : 1636}
            y={y}
            width={narrow ? 30 : 45}
            height={narrow && y === 308 ? 12 : 15}
            fill={red ? "#ff0000" : THISTLE}
          />
          <TagText x="1658" y={y + 11}>
            {text}
          </TagText>
        </g>
      ))}
      {WEEKS.map(([x, label]) => (
        <WeekText key={label} x={x - 2} y="813">
          {label}
        </WeekText>
      ))}
      <path d="M1617 99h13l-6 6z" fill="#778899" />
      <text x="1597" y="124" fill="#fff" fontFamily={LABEL_FONT} fontSize="28">
        ドル円4時間
      </text>
      <path d="M1 106h9l-5 5z" fill={THISTLE} />
      <Caption x="16" y="113">
        USDJPY,H4
      </Caption>
      {QUOTES.map((quote, i) => (
        <Caption key={quote} x={86 + 50 * i} y="113">
          {quote}
        </Caption>
      ))}
      <text x="4" y="795" fill="#ff00ff" fontFamily={CHART_FONT} fontSize="20">
        Spread : 25.0
      </text>
    </g>
  </Drawing>
);

const PriceAxis = () => (
  <Axis aria-label="Price scale">
    <g transform="translate(0 -98)">
      {SCALE.map(([y, text]) => (
        <g key={text}>
          <rect x="0" y={y - 1} width="2" height="1" fill={THISTLE} />
          <Caption x="6" y={y + 4}>
            {text}
          </Caption>
        </g>
      ))}
      {PRICE_BOXES.map(([y, text, red]) => (
        <g key={text}>
          <rect x="1" y={y - 7} width="56" height="14" fill={red ? "#ff0000" : THISTLE} />
          <Caption x="6" y={y + 5} $dark>
            {text}
          </Caption>
        </g>
      ))}
    </g>
  </Axis>
);

const StochPlot = () => (
  <Drawing role="img" aria-label="Stochastic oscillators">
    <defs>
      <pattern id="guide" width="6" height="1" patternUnits="userSpaceOnUse">
        <rect width="3" height="1" fill="#fff" />
      </pattern>
    </defs>
    <g transform="translate(0 -815)">
      {STOCH_TITLES.map(([x, title]) => (
        <Caption key={title} x={x} y="829">
          {title}
        </Caption>
      ))}
      <g fill="none" shapeRendering="crispEdges">
        {STOCH.map((s) => (
          <polyline key={s.color} points={s.points} stroke={s.color} strokeWidth={s.width ?? 1} strokeDasharray={s.dash} />
        ))}
      </g>
      <rect x="0" y="842" width="100%" height="1" fill="url(#guide)" />
      <rect x="0" y="923" width="100%" height="1" fill="url(#guide)" />
      <path d="M0 945l5 5H0z" fill="#778899" />
    </g>
  </Drawing>
);

const StochAxis = () => (
  <Axis aria-label="Oscillator scale">
    <g transform="translate(0 -814)">
      <Caption x="3" y="827">100</Caption>
      <Caption x="2" y="846" $strong>80</Caption>
      <Caption x="2" y="927" $strong>20</Caption>
      <Caption x="4" y="946">0</Caption>
    </g>
  </Axis>
);

const MENU: [string, number][] = [
  ["ファイル (F)", 84], ["表示 (V)", 75], ["挿入(I)", 65], ["チャート (C)", 85], ["ツール (T)", 75],
  ["ウィンドウ (W)", 102], ["ヘルプ (H)", 70],
];

const PERIODS: [string, number][] = [
  ["M1", 34], ["M5", 34], ["M15", 35], ["M30", 34], ["H1", 34], ["H4", 33], ["D1", 34], ["W1", 35], ["MN", 33],
];

const DrawTools: [string, number, React.ComponentType][] = [
  ["Vertical line", 37, VLineIcon], ["Horizontal line", 33, HLineIcon], ["Trend line", 34, TrendIcon],
  ["Channel", 34, ChannelIcon], ["Fibonacci", 35, FiboIcon], ["Fibonacci channel", 34, PitchIcon],
  ["Text", 33, TextIcon], ["Text label", 34, LabelIcon], ["Rectangle", 34, RectIcon],
];

export default function App() {
  return (
    <Page>
      <GlobalStyle />
      <MenuBar>
        <AppMark><LogoIcon /></AppMark>
        {MENU.map(([label, w]) => (
          <MenuItem key={label} $w={w}>{label}</MenuItem>
        ))}
        <WindowButtons>
          <WindowButton aria-label="Minimize">
            <Icon w={10} h={10}><path d="M2 7h6" stroke="#607080" strokeWidth="2" /></Icon>
          </WindowButton>
          <WindowButton aria-label="Restore">
            <Icon w={10} h={10}>
              <path d="M3 3V1h6v4H7" stroke="#607080" strokeWidth="1.300" />
              <rect x="1" y="4" width="6" height="4" stroke="#607080" strokeWidth="1.300" />
            </Icon>
          </WindowButton>
          <WindowButton aria-label="Close">
            <Icon w={10} h={10}><path d="M2 2l6 6M8 2L2 8" stroke="#607080" strokeWidth="2" /></Icon>
          </WindowButton>
        </WindowButtons>
      </MenuBar>

      <ToolArea>
        <ToolRow>
          <ToolStrip $ruled>
            <Tool $w={44} aria-label="New chart"><NewChartIcon /><Caret /></Tool>
            <Tool $w={50} aria-label="Profiles"><ProfilesIcon /><Caret /></Tool>
            <Separator />
            <Tool $w={36} aria-label="Market watch"><MarketIcon /></Tool>
            <Tool $w={34} aria-label="Data window"><CrosshairIcon /></Tool>
            <Tool $w={32} aria-label="Navigator"><NavigatorIcon /></Tool>
            <Tool $w={36} aria-label="Terminal"><TerminalIcon /></Tool>
            <Tool $w={34} aria-label="Strategy tester"><TesterIcon /></Tool>
            <Separator />
            <Tool $w={101}><NewOrderIcon />新規注文</Tool>
            <Tool $w={29} aria-label="Editor"><BookIcon /></Tool>
            <Tool $w={40} aria-label="Cloud"><CloudIcon /></Tool>
            <Tool $w={28} aria-label="Signals"><SignalIcon /></Tool>
            <Separator $w={5} />
            <Tool $w={96} $pressed><AutoTradeIcon />自動売買</Tool>
            <Grip $w={11} />
            <Tool $w={34} aria-label="Bar chart"><BarsIcon /></Tool>
            <Tool $w={31} $pressed aria-label="Candlesticks"><CandlesIcon /></Tool>
            <Tool $w={37} aria-label="Line chart"><LineChartIcon /></Tool>
            <Separator />
            <Tool $w={38} aria-label="Zoom in"><ZoomIcon plus /></Tool>
            <Tool $w={32} aria-label="Zoom out"><ZoomIcon /></Tool>
            <Tool $w={36} aria-label="Tile windows"><TilesIcon /></Tool>
            <Separator />
            <Tool $w={38} aria-label="Auto scroll"><ScrollIcon /></Tool>
            <Tool $w={31} $pressed aria-label="Chart shift"><ShiftIcon /></Tool>
            <Separator $w={10} />
            <Tool $w={46} aria-label="Indicators"><IndicatorIcon /><Caret /></Tool>
            <Tool $w={45} aria-label="Periods"><ClockIcon /><Caret /></Tool>
            <Tool $w={49} aria-label="Templates"><TemplateIcon /><Caret /></Tool>
          </ToolStrip>
          <StatusTools>
            <IconButton aria-label="Search"><SearchIcon /></IconButton>
            <IconButton aria-label="Messages"><ChatIcon /></IconButton>
          </StatusTools>
        </ToolRow>
        <ToolRow>
          <ToolStrip>
            <Tool $w={32} $pressed aria-label="Cursor"><CursorIcon /></Tool>
            <Tool $w={38} aria-label="Crosshair"><CrossIcon /></Tool>
            <Separator />
            {DrawTools.map(([label, w, Glyph]) => (
              <Tool key={label} $w={w} aria-label={label}><Glyph /></Tool>
            ))}
            <Tool $w={46} aria-label="Arrows"><ShapesIcon /><Caret /></Tool>
            <Tool $w={33} aria-label="Angle"><AngleIcon /></Tool>
            <Separator />
            <Grip $w={6} />
            {PERIODS.map(([label, w]) => (
              <PeriodTool key={label} $w={w} $pressed={label === "H4"}>{label}</PeriodTool>
            ))}
          </ToolStrip>
        </ToolRow>
      </ToolArea>

      <ChartWindow>
        <Pane $h={715}>
          <Plot><PricePlot /></Plot>
          <PriceAxis />
        </Pane>
        <Pane $h={137}>
          <Plot><StochPlot /></Plot>
          <StochAxis />
        </Pane>
        <DateScale aria-label="Date scale">
          {DATES.map((text, i) => (
            <g key={text}>
              {i > 0 && <rect x={96 * i - 2} y="0" width="1" height="3" fill={THISTLE} />}
              <Caption x={96 * i - 3} y="14">{text}</Caption>
            </g>
          ))}
        </DateScale>
      </ChartWindow>
    </Page>
  );
}
